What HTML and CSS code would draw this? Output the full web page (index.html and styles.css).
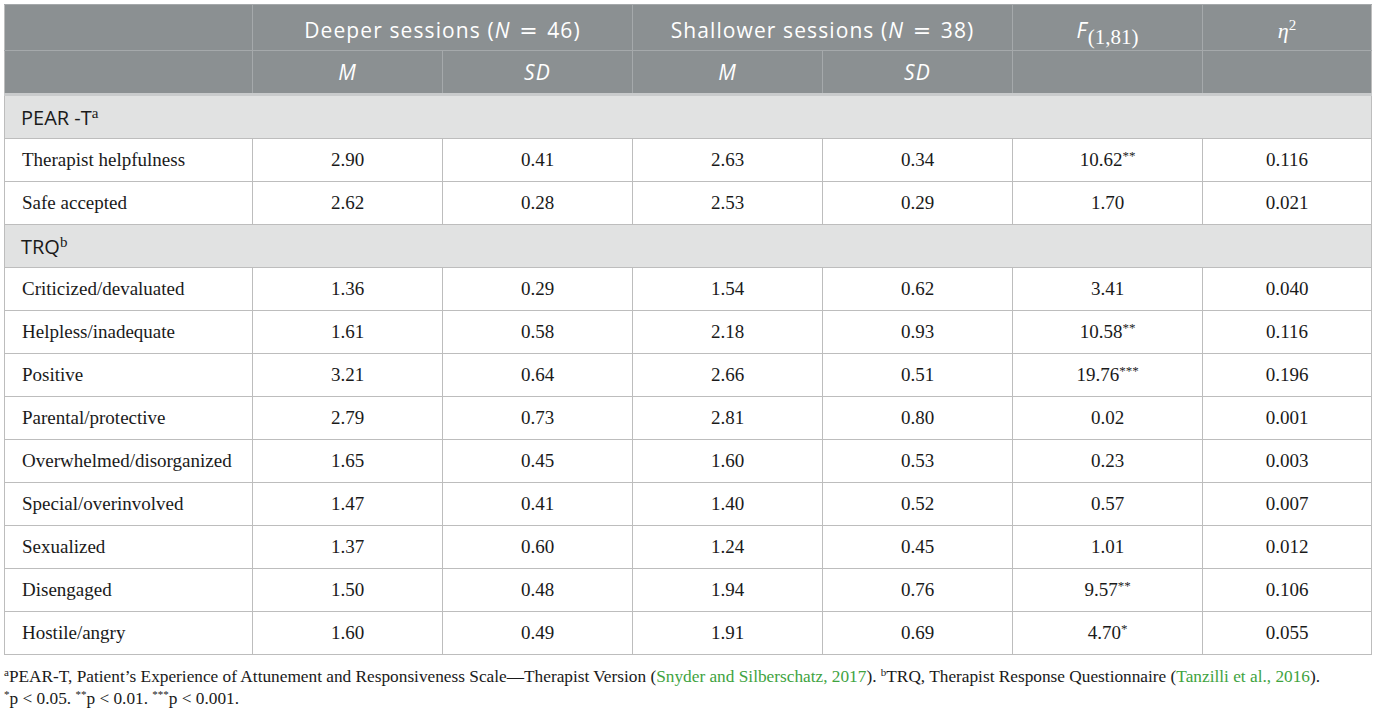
FILE: index.html
```html
<!DOCTYPE html>
<html lang="en">
<head>
    <meta charset="UTF-8">
    <title>Table</title>
    <link rel="stylesheet" href="styles.css">
</head>
<body>
    <table class="data-table">
        <colgroup>
            <col class="c-label">
            <col class="c-num"><col class="c-num"><col class="c-num"><col class="c-num"><col class="c-num">
            <col class="c-last">
        </colgroup>
        <thead>
            <tr class="head-top">
                <th></th>
                <th colspan="2">Deeper sessions (<i>N</i> <span class="eq">=</span> 46)</th>
                <th colspan="2">Shallower sessions (<i>N</i> <span class="eq">=</span> 38)</th>
                <th><i>F</i><sub class="math">(1,81)</sub></th>
                <th><i class="math">η</i><sup class="math">2</sup></th>
            </tr>
            <tr>
                <th></th>
                <th><i>M</i></th>
                <th><i>SD</i></th>
                <th><i>M</i></th>
                <th><i>SD</i></th>
                <th></th>
                <th></th>
            </tr>
        </thead>
        <tbody>
            <tr class="group"><td colspan="7">PEAR -T<sup class="math">a</sup></td></tr>
            <tr><td>Therapist helpfulness</td><td>2.90</td><td>0.41</td><td>2.63</td><td>0.34</td><td>10.62<sup>**</sup></td><td>0.116</td></tr>
            <tr><td>Safe accepted</td><td>2.62</td><td>0.28</td><td>2.53</td><td>0.29</td><td>1.70</td><td>0.021</td></tr>
            <tr class="group"><td colspan="7">TRQ<sup class="math">b</sup></td></tr>
            <tr><td>Criticized/devaluated</td><td>1.36</td><td>0.29</td><td>1.54</td><td>0.62</td><td>3.41</td><td>0.040</td></tr>
            <tr><td>Helpless/inadequate</td><td>1.61</td><td>0.58</td><td>2.18</td><td>0.93</td><td>10.58<sup>**</sup></td><td>0.116</td></tr>
            <tr><td>Positive</td><td>3.21</td><td>0.64</td><td>2.66</td><td>0.51</td><td>19.76<sup>***</sup></td><td>0.196</td></tr>
            <tr><td>Parental/protective</td><td>2.79</td><td>0.73</td><td>2.81</td><td>0.80</td><td>0.02</td><td>0.001</td></tr>
            <tr><td>Overwhelmed/disorganized</td><td>1.65</td><td>0.45</td><td>1.60</td><td>0.53</td><td>0.23</td><td>0.003</td></tr>
            <tr><td>Special/overinvolved</td><td>1.47</td><td>0.41</td><td>1.40</td><td>0.52</td><td>0.57</td><td>0.007</td></tr>
            <tr><td>Sexualized</td><td>1.37</td><td>0.60</td><td>1.24</td><td>0.45</td><td>1.01</td><td>0.012</td></tr>
            <tr><td>Disengaged</td><td>1.50</td><td>0.48</td><td>1.94</td><td>0.76</td><td>9.57<sup>**</sup></td><td>0.106</td></tr>
            <tr><td>Hostile/angry</td><td>1.60</td><td>0.49</td><td>1.91</td><td>0.69</td><td>4.70<sup>*</sup></td><td>0.055</td></tr>
        </tbody>
    </table>

    <div class="notes">
        <p><sup>a</sup>PEAR-T, Patient’s Experience of Attunement and Responsiveness Scale—Therapist Version (<a href="#">Snyder and Silberschatz, 2017</a>). <sup>b</sup>TRQ, Therapist Response Questionnaire (<a href="#">Tanzilli et al., 2016</a>).</p>
        <p><sup>*</sup>p &lt; 0.05. <sup>**</sup>p &lt; 0.01. <sup>***</sup>p &lt; 0.001.</p>
    </div>
</body>
</html>
```

FILE: styles.css
```css
body {
    margin: 0;
    padding: 4px;
    background-color: white;
    font-family: "Liberation Serif", "Times New Roman", serif;
    color: #1a1a1a;
}
.data-table {
    width: 1367px;
    border-collapse: collapse;
    table-layout: fixed;
    border: 1px solid #bdbdbd;
}
.c-label {
    width: 248px;
}
.c-num {
    width: 190px;
}
.c-last {
    width: 169px;
}
.data-table th {
    background-color: #8b9092;
    color: white;
    font-family: "Open Sans", Lato, sans-serif;
    font-weight: normal;
    font-size: 21px;
    letter-spacing: 1.1px;
    height: 42px;
    padding: 0;
    text-align: center;
    border-left: 1px solid #a5a9ab;
    border-top: 1px solid #a5a9ab;
}
.head-top th {
    padding-top: 4px;
    height: 41px;
}
.data-table thead tr:last-child th {
    border-bottom: 3px solid #c9cbcc;
}
.data-table th:first-child {
    border-left: none;
}
.eq {
    font-family: "DejaVu Sans", sans-serif;
    font-size: 22px;
    padding: 0 2px;
}
.data-table td {
    height: 42px;
    padding: 0;
    text-align: center;
    font-size: 19px;
    border: 1px solid #bdbdbd;
}
.data-table td:first-child {
    text-align: left;
    padding-left: 17px;
}
.data-table .group td {
    background-color: #e1e2e2;
    font-family: "Open Sans", Lato, sans-serif;
    font-size: 20px;
    padding-left: 16px;
}
.data-table td sup {
    font-size: 13px;
    vertical-align: 6px;
    line-height: 0;
}
.math {
    font-family: "Liberation Serif", "Times New Roman", serif;
    letter-spacing: 0;
}
th sub.math {
    font-size: 21px;
    vertical-align: -6px;
    line-height: 0;
}
th sup.math {
    font-size: 15px;
    vertical-align: 8px;
    line-height: 0;
}
th i.math {
    font-size: 22px;
}
.group sup.math {
    font-size: 15px;
    vertical-align: 7px;
}
.notes {
    margin-top: 11px;
    font-size: 17.3px;
}
.notes p {
    margin: 0;
    line-height: 22px;
}
.notes sup {
    font-size: 11px;
    vertical-align: 6px;
    line-height: 0;
}
.notes a {
    color: #3fa33f;
    text-decoration: none;
}
```
